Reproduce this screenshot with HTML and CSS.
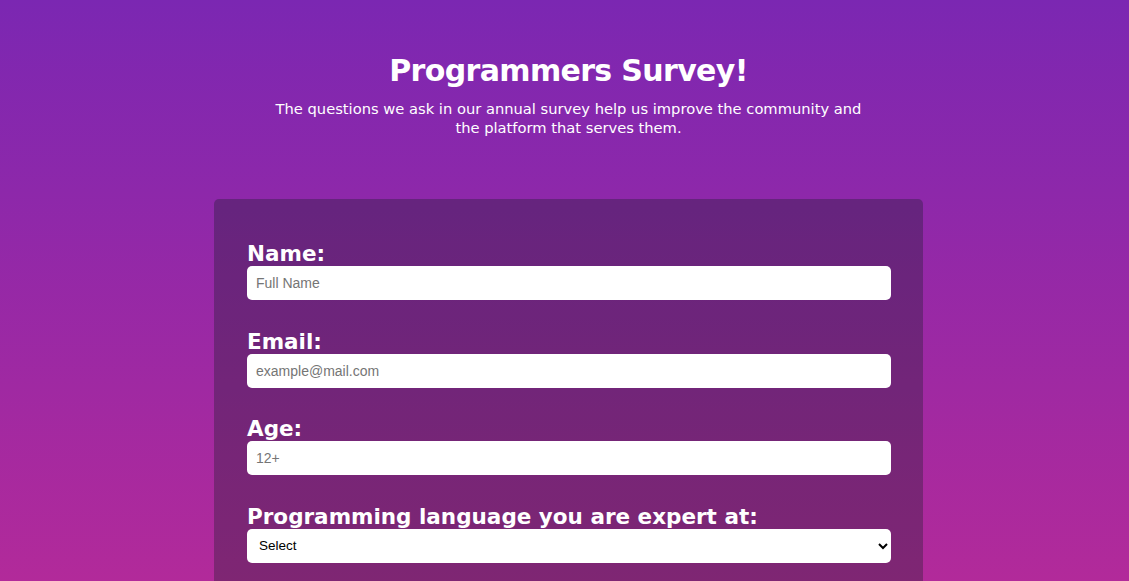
FILE: index.html
```html
<!DOCTYPE html>
<html lang="en">
<head>
<meta charset="utf-8">
<title>Programmers Survey</title>
<link rel="stylesheet" href="styles.css">
</head>
<body>
<header class="header">
  <h1 class="title">Programmers Survey!</h1>
  <p class="description">The questions we ask in our annual survey help us improve the community and the platform that serves them.</p>
</header>
<form class="card">
  <div class="group">
    <label class="label" for="name">Name:</label>
    <input class="field" id="name" type="text" placeholder="Full Name">
  </div>
  <div class="group">
    <label class="label" for="email">Email:</label>
    <input class="field" id="email" type="email" placeholder="example@mail.com">
  </div>
  <div class="group">
    <label class="label" for="age">Age:</label>
    <input class="field" id="age" type="number" placeholder="12+">
  </div>
  <div class="group">
    <label class="label" for="lang">Programming language you are expert at:</label>
    <select class="field select" id="lang">
      <option>Select</option>
      <option>JavaScript</option>
      <option>Python</option>
    </select>
  </div>
</form>
</body>
</html>
```
FILE: styles.css
```css
html {
  background: linear-gradient(180deg, #7b27b2 0px, #b22a9a 581px) no-repeat top / 100% 581px, #b22a9a;
}
body {
  margin: 0 0 0 8px;
  font-family: "DejaVu Sans", Verdana, sans-serif;
  color: #fff;
}
.header {
  text-align: center;
  padding-top: 52px;
}
.title {
  margin: 0;
  font-family: "DejaVu Sans", Tahoma, sans-serif;
  font-weight: bold;
  font-size: 30px;
  line-height: 38px;
  letter-spacing: -0.65px;
}
.description {
  margin: 9px auto 0;
  max-width: 610px;
  font-family: "DejaVu Sans", Tahoma, sans-serif;
  font-size: 14.7px;
  line-height: 19px;
}
.card {
  width: 709px;
  box-sizing: border-box;
  margin: 62px auto 0;
  padding: 42px 32px 40px 33px;
  background: rgba(10, 30, 25, 0.3);
  border-radius: 5px;
}
.group {
  margin-bottom: 28.5px;
}
.group:last-child {
  margin-bottom: 0;
}
.label {
  display: block;
  font-weight: bold;
  font-size: 21.5px;
  line-height: 25px;
}
.field {
  display: block;
  width: 100%;
  box-sizing: border-box;
  height: 34px;
  border: none;
  border-radius: 5px;
  padding: 0 9px;
  font-family: "Liberation Sans", Arial, sans-serif;
  font-size: 14px;
  background: #fff;
  color: #000;
  outline: none;
}
.field::placeholder {
  color: #757575;
}
.select {
  padding-left: 8px;
  font-size: 13.5px;
}
```
